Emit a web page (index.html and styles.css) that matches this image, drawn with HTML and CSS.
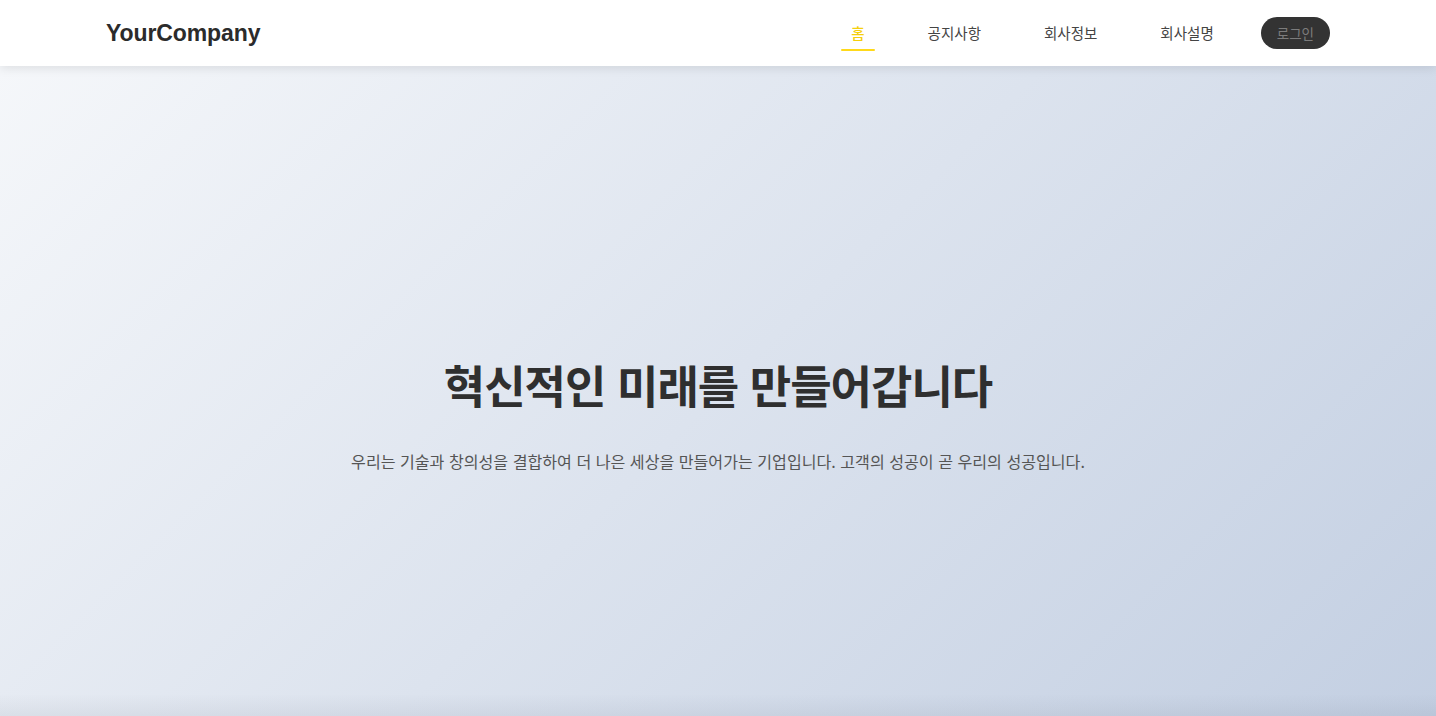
FILE: index.html
```html
<!DOCTYPE html>
<html lang="ko">
<head>
<meta charset="utf-8">
<title>YourCompany</title>
<link rel="stylesheet" href="styles.css">
</head>
<body>
<header class="site-header">
  <div class="header-inner">
    <a class="logo" href="#">YourCompany</a>
    <nav class="nav">
      <ul class="nav-list">
        <li><a class="nav-link active" href="#">홈</a></li>
        <li><a class="nav-link" href="#">공지사항</a></li>
        <li><a class="nav-link" href="#">회사정보</a></li>
        <li><a class="nav-link" href="#">회사설명</a></li>
      </ul>
      <button class="login-btn" type="button">로그인</button>
    </nav>
  </div>
</header>
<main class="hero">
  <h1 class="hero-title">혁신적인 미래를 만들어갑니다</h1>
  <p class="hero-text">우리는 기술과 창의성을 결합하여 더 나은 세상을 만들어가는 기업입니다. 고객의 성공이 곧 우리의 성공입니다.</p>
</main>
</body>
</html>
```

FILE: styles.css
```css
* { box-sizing: border-box; }
html, body { margin: 0; padding: 0; }
body {
  font-family: "Noto Sans CJK KR", "Noto Sans", sans-serif;
  color: #333;
  height: 716px;
  overflow: hidden;
  background: #c3cfe2;
}
.site-header {
  position: relative;
  z-index: 2;
  height: 66px;
  background: #fff;
  box-shadow: 0 2px 10px rgba(0, 0, 0, 0.1);
}
.header-inner {
  max-width: 1224px;
  height: 100%;
  margin: 0 auto;
  display: flex;
  align-items: center;
  justify-content: space-between;
}
.logo {
  font-family: "Liberation Sans", Arial, sans-serif;
  font-weight: 700;
  font-size: 23px;
  letter-spacing: -0.1px;
  color: #2b2b2b;
  text-decoration: none;
  margin-top: 1px;
}
.nav {
  display: flex;
  align-items: center;
  gap: 37px;
}
.nav-list {
  list-style: none;
  margin: 0;
  padding: 0;
  display: flex;
  gap: 43px;
}
.nav-link {
  display: block;
  position: relative;
  padding: 4px 10px;
  font-size: 14.5px;
  color: #444;
  text-decoration: none;
  line-height: 20px;
}
.nav-link.active {
  color: #f5cf0c;
  font-weight: 500;
}
.nav-link.active::after {
  content: "";
  position: absolute;
  left: 0;
  right: 0;
  bottom: -4px;
  height: 2px;
  border-radius: 1px;
  background: #ffd91a;
}
.login-btn {
  height: 32px;
  padding: 0 16px;
  border: none;
  border-radius: 16px;
  background: #333;
  color: #7c7c7c;
  font-family: "Noto Sans CJK KR", sans-serif;
  font-size: 13.5px;
  cursor: pointer;
}
.hero {
  height: 650px;
  margin: 0;
  padding-top: 50px;
  display: flex;
  flex-direction: column;
  align-items: center;
  justify-content: center;
  text-align: center;
  background:
    linear-gradient(to bottom, rgba(0, 0, 0, 0) calc(100% - 22px), rgba(60, 70, 90, 0.07) 100%),
    linear-gradient(135deg, #f5f7fa 0%, #c3cfe2 100%);
}
.hero-title {
  margin: 0;
  font-size: 45px;
  line-height: 54px;
  font-weight: 700;
  letter-spacing: -1px;
  color: #2f2f2f;
}
.hero-text {
  margin: 36px 0 0;
  font-size: 16.1px;
  line-height: 26px;
  color: #555;
}
```
